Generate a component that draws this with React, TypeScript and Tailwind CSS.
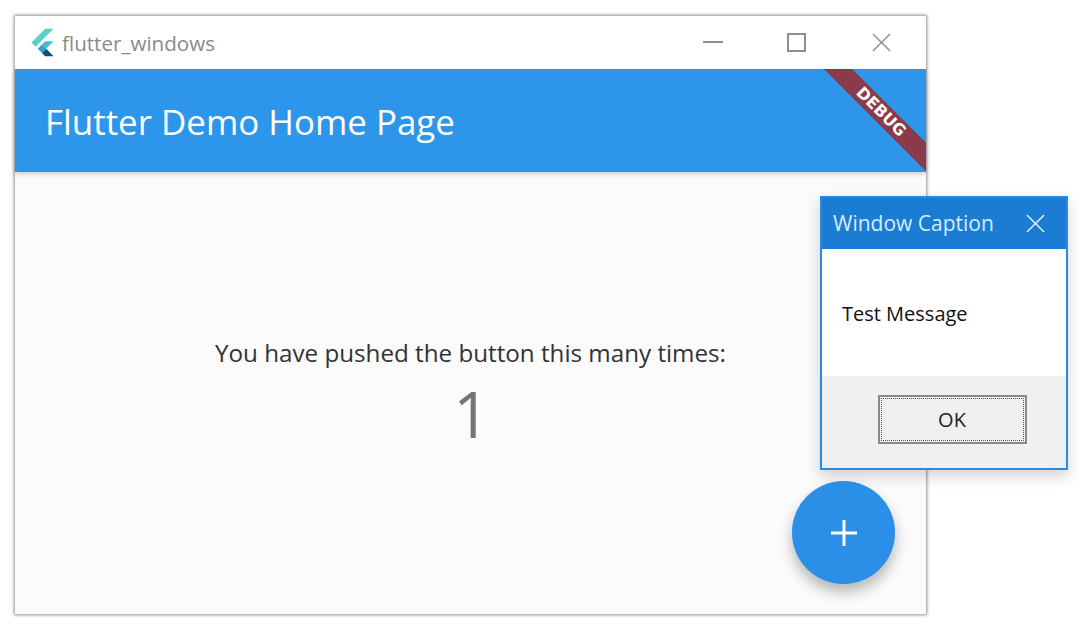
const font = "font-['Open_Sans','Noto_Sans',sans-serif]"

const FlutterLogo = () => (
  <svg width="25" height="31" viewBox="0 0 166 202">
    <path d="M37.7 128.9 9.8 101 100.4 10.4h55.8L37.7 128.9" fill="#5ccfc9" />
    <path d="M156.2 93.2h-55.8l-20.9 20.9 27.9 27.9" fill="#4cb8d8" />
    <path d="M79.5 170.7l20.9 20.9h55.8l-48.8-48.8" fill="#0d4f78" />
    <path d="M51.6 142.8 79.5 114.9 107.4 142.8 79.5 170.7" fill="#2f9fd0" />
  </svg>
)

const CloseIcon = ({ size, color }: { size: number; color: string }) => (
  <svg width={size} height={size} viewBox="0 0 20 20" fill="none" stroke={color} strokeWidth="1.5">
    <path d="M1 1 19 19M19 1 1 19" />
  </svg>
)

const TitleBar = () => (
  <div className="h-[53px] bg-white flex items-center">
    <div className="ml-[15px] mr-[7px] flex items-center">
      <FlutterLogo />
    </div>
    <span className="text-[20.6px] text-[#8a8a8a] leading-none mt-[1px]">flutter_windows</span>
    <div className="ml-auto flex items-center mr-[35px] -mt-[1px]">
      <div className="w-[20px] h-[2px] bg-[#8e8e8e]" />
      <div className="ml-[64px] w-[19px] h-[19px] border-2 border-[#8e8e8e]" />
      <div className="ml-[66px]">
        <CloseIcon size={19} color="#8e8e8e" />
      </div>
    </div>
  </div>
)

const AppBar = () => (
  <div className="relative h-[103px] bg-[#2d96ea] flex items-center pl-[30px] overflow-hidden shadow-[0_2px_5px_rgba(0,0,0,0.2)]">
    <span className="text-[34.9px] text-white leading-none mt-[3px]">Flutter Demo Home Page</span>
    <div className="absolute right-[-45px] top-[33px] w-[180px] h-[20px] rotate-45 bg-[#8b3a4a] flex items-center justify-center">
      <span className="font-['DejaVu_Sans',sans-serif] font-bold text-[16px] leading-none text-white">DEBUG</span>
    </div>
  </div>
)

const Dialog = () => (
  <div className="absolute left-[805px] top-[180px] w-[248px] h-[274px] bg-white border-2 border-[#2b8ae0] flex flex-col shadow-[0_6px_14px_rgba(0,0,0,0.18)]">
    <div className="h-[51px] bg-[#1a7cd3] flex items-center pl-[11px] pr-[21px] justify-between">
      <span className="text-[21px] text-[#d6ecff] leading-none">Window Caption</span>
      <CloseIcon size={19} color="#e8f4ff" />
    </div>
    <div className="h-[127px] flex items-center pl-[20px]">
      <span className="text-[20px] text-[#111] leading-none mt-[2px]">Test Message</span>
    </div>
    <div className="flex-1 bg-[#f0f0f0] flex justify-center pt-[19px] pl-[16px]">
      <div className="w-[149px] h-[49px] border-2 border-[#8a8a8a] bg-[#efefef] p-[1px]">
        <div className="w-full h-full border border-dotted border-[#555] flex items-center justify-center">
          <span className="text-[20px] text-[#222] leading-none">OK</span>
        </div>
      </div>
    </div>
  </div>
)

const App = () => (
  <div className={`w-[1080px] h-[629px] bg-white pl-[15px] pt-[16px] overflow-hidden ${font}`}>
    <div className="relative w-[911px] h-[598px] bg-[#fbfbfb] flex flex-col shadow-[0_0_3px_1px_rgba(0,0,0,0.45)]">
      <TitleBar />
      <AppBar />
      <div className="flex-1 flex flex-col items-center pt-[166px]">
        <span className="text-[24.2px] text-[#333] leading-[30px]">You have pushed the button this many times:</span>
        <span className="text-[64px] text-[#757575] leading-[72px] mt-[10px] ml-[2px]">1</span>
      </div>
      <Dialog />
      <div className="absolute left-[777px] top-[465px] w-[103px] h-[103px] rounded-full bg-[#2a8fe6] flex items-center justify-center shadow-[0_8px_14px_rgba(0,0,0,0.28)]">
        <svg width="26" height="26" viewBox="0 0 26 26" fill="#fff">
          <path d="M11.5 0h3v11.5H26v3H14.5V26h-3V14.5H0v-3h11.5z" />
        </svg>
      </div>
    </div>
  </div>
)

export default App
